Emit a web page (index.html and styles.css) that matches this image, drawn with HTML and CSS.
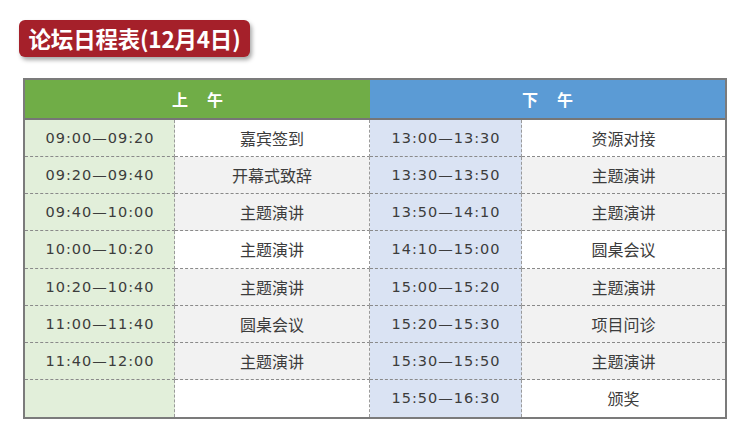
FILE: index.html
```html
<!DOCTYPE html>
<html lang="zh-CN">
<head>
<meta charset="utf-8">
<title>论坛日程表</title>
<link rel="stylesheet" href="styles.css">
</head>
<body>
<div class="page">
  <h1 class="title">论坛日程表(12月4日)</h1>
  <div class="schedule">
    <div class="head am"><span>上</span><span>午</span></div>
    <div class="head pm"><span>下</span><span>午</span></div>

    <div class="cell t1">09:00—09:20</div><div class="cell a">嘉宾签到</div><div class="cell t2">13:00—13:30</div><div class="cell a r">资源对接</div>
    <div class="cell t1">09:20—09:40</div><div class="cell a g">开幕式致辞</div><div class="cell t2">13:30—13:50</div><div class="cell a g r">主题演讲</div>
    <div class="cell t1">09:40—10:00</div><div class="cell a g">主题演讲</div><div class="cell t2">13:50—14:10</div><div class="cell a g r">主题演讲</div>
    <div class="cell t1">10:00—10:20</div><div class="cell a">主题演讲</div><div class="cell t2">14:10—15:00</div><div class="cell a r">圆桌会议</div>
    <div class="cell t1">10:20—10:40</div><div class="cell a g">主题演讲</div><div class="cell t2">15:00—15:20</div><div class="cell a g r">主题演讲</div>
    <div class="cell t1">11:00—11:40</div><div class="cell a g">圆桌会议</div><div class="cell t2">15:20—15:30</div><div class="cell a g r">项目问诊</div>
    <div class="cell t1">11:40—12:00</div><div class="cell a g">主题演讲</div><div class="cell t2">15:30—15:50</div><div class="cell a g r">主题演讲</div>
    <div class="cell t1 last"></div><div class="cell a last"></div><div class="cell t2 last">15:50—16:30</div><div class="cell a r last">颁奖</div>
  </div>
</div>
</body>
</html>
```

FILE: styles.css
```css
* { box-sizing: border-box; }
html, body { margin: 0; padding: 0; background: #ffffff; }
body {
  font-family: "Noto Sans CJK SC", "Noto Sans", sans-serif;
  color: #3c3c3c;
}
.page {
  display: flex;
  flex-direction: column;
  align-items: flex-start;
  padding-top: 20px;
}
.title {
  margin: 0 0 21px 19px;
  height: 37px;
  width: 231px;
  display: flex;
  align-items: center;
  justify-content: center;
  background: #a5202a;
  color: #ffffff;
  border-radius: 6px;
  box-shadow: 2px 3px 4px rgba(0, 0, 0, 0.35);
  font-size: 22.5px;
  font-weight: 700;
  letter-spacing: -0.2px;
  line-height: 1;
}
.schedule {
  margin-left: 23px;
  width: 704px;
  border: 2px solid #7b7b7b;
  display: grid;
  grid-template-columns: 150px 195px 152px 203px;
  grid-template-rows: 40px repeat(8, 37.125px);
}
.head {
  grid-column: span 2;
  display: flex;
  align-items: center;
  justify-content: center;
  gap: 19px;
  color: #ffffff;
  font-weight: 700;
  font-size: 16px;
  border-bottom: 2px solid #767676;
}
.head.am { background: #70ad47; }
.head.pm { background: #5b9bd5; }
.cell {
  display: flex;
  align-items: center;
  justify-content: center;
  border-bottom: 1px dashed #8a8a8a;
  border-right: 1px dashed #9a9a9a;
  font-size: 16px;
  background: #ffffff;
}
.cell.last { border-bottom: none; }
.cell.r { border-right: none; }
.t1, .t2 {
  font-family: "DejaVu Sans", sans-serif;
  font-size: 14.5px;
  letter-spacing: 1px;
  padding-left: 1px;
}
.t1 { background: #e2efda; }
.t2 { background: #dae3f3; }
.a.g { background: #f2f2f2; }
```
